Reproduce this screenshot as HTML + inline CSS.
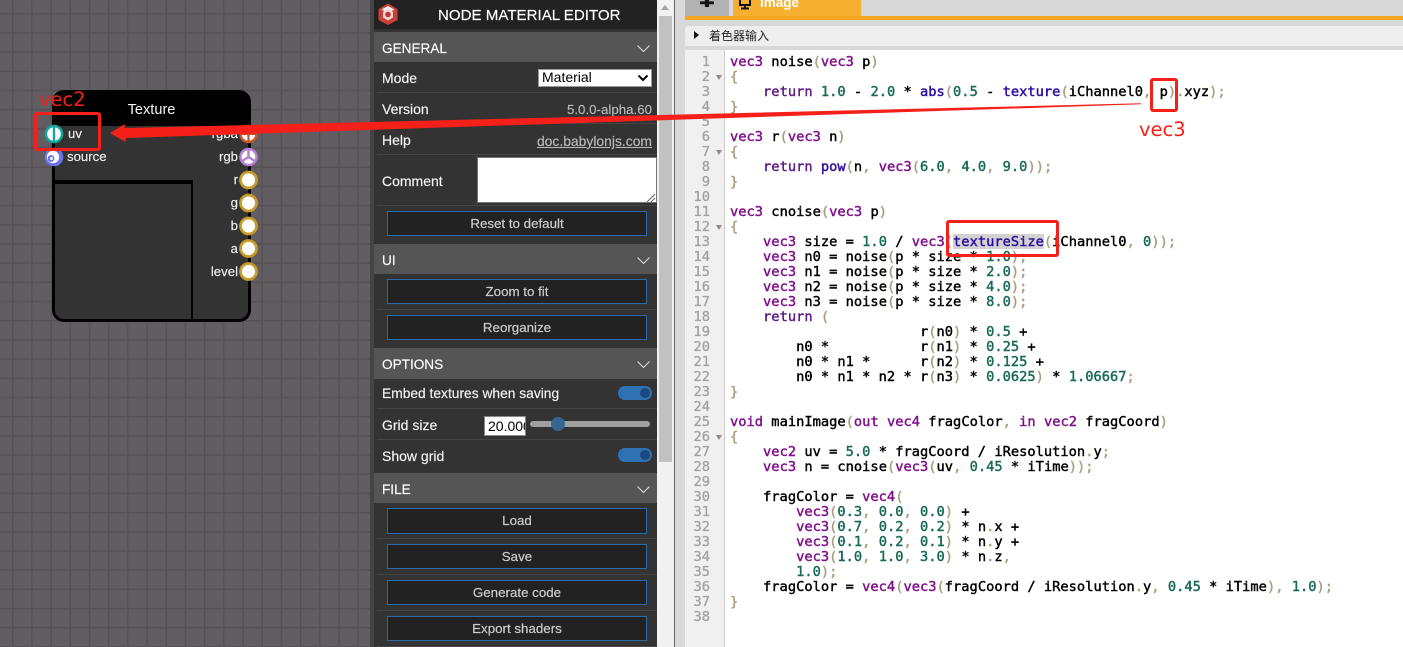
<!DOCTYPE html>
<html lang="zh"><head><meta charset="utf-8"><title>Node Material Editor</title>
<style>
html,body{margin:0;padding:0;width:1403px;height:647px;overflow:hidden;background:#d8d8d8;font-family:"Liberation Sans",Arial,sans-serif}
.a{position:absolute}
#grid{left:0;top:0;width:370px;height:647px;background-color:#615d62;background-image:linear-gradient(#555155 1.5px,transparent 1.5px),linear-gradient(90deg,#555155 1.5px,transparent 1.5px);background-size:19.2px 19.2px;background-position:12px 13px}
#panel{left:370px;top:0;width:287px;height:647px;background:#333;border-left:4px solid #444;box-sizing:border-box;color:#fff;font-size:14px}
.t{position:absolute;white-space:nowrap;line-height:16px;color:#f4f4f4;font-size:14px;-webkit-text-stroke:.15px currentColor}
.h{position:absolute;left:374px;width:283px;height:30px;background:#555;color:#fff;font-size:13.6px;line-height:34px;-webkit-text-stroke:.15px currentColor}
.h span{position:absolute;left:8px}
.h svg{position:absolute;left:262px;top:11px}
.s{position:absolute;left:377px;width:280px;height:1px;background:#444}
.b{position:absolute;left:387px;width:260px;height:25px;box-sizing:border-box;border:1px solid #2b6aa8;background:#222;color:#ccc;font-size:13.33px;font-weight:400;line-height:23px;text-align:center;-webkit-text-stroke:.2px currentColor}
.tog{position:absolute;left:618px;width:34px;height:14px;border-radius:7px;background:#2e72b4}
.tog i{position:absolute;right:2px;top:2px;width:10px;height:10px;border-radius:50%;background:#1c4a7e}
#code{left:730px;top:55px;margin:0;font:13.72px/15px "DejaVu Sans Mono","Liberation Mono",monospace;color:#000;-webkit-text-stroke:.42px currentColor;white-space:pre}
#nums{left:685px;top:55px;width:25px;margin:0;text-align:right;font:13.72px/15px "DejaVu Sans Mono",monospace;color:#a3a3a3;-webkit-text-stroke:.35px currentColor;white-space:pre}
.k{color:#80108c}.r{color:#5c1b84}.f{color:#2b0ba0}.n{color:#176a55}.p{color:#a89f80}
.lb{position:absolute;color:#f0f0f0;font-size:13.2px;line-height:16px;white-space:nowrap;-webkit-text-stroke:.15px currentColor}
.lr{right:1165px;text-align:right}
.red{position:absolute;border:3px solid #f5201a;box-sizing:border-box;border-radius:3px}
.fold{position:absolute;left:716px;width:0;height:0;border-left:3px solid transparent;border-right:3px solid transparent;border-top:5px solid #8c8c8c}
</style></head><body>
<div class="a" id="grid"></div>

<!-- node -->
<div class="a" style="left:52px;top:90px;width:199px;height:232px;box-sizing:border-box;background:#333;border:3.5px solid #000;border-radius:12px;overflow:hidden">
  <div class="a" style="left:-4px;top:-4px;width:210px;height:37px;background:#000"></div>
  <div class="a" style="left:-4px;top:87px;width:142px;height:150px;box-sizing:border-box;border:solid #000;border-width:4px 2.5px 0 0"></div>
</div>
<div class="a" style="left:52px;top:101px;width:199px;text-align:center;color:#f5f5f5;font-size:14.6px;line-height:18px">Texture</div>
<div class="lb" style="left:68px;top:126px">uv</div>
<div class="lb" style="left:67px;top:149px">source</div>
<div class="lb lr" style="top:126px">rgba</div>
<div class="lb lr" style="top:149px">rgb</div>
<div class="lb lr" style="top:172px">r</div>
<div class="lb lr" style="top:195px">g</div>
<div class="lb lr" style="top:218px">b</div>
<div class="lb lr" style="top:241px">a</div>
<div class="lb lr" style="top:264px">level</div>
<svg class="a" style="left:0;top:0" width="300" height="300" viewBox="0 0 300 300">
  <circle cx="54" cy="134" r="9.3" fill="#16a79c"/><circle cx="54" cy="134" r="6.8" fill="#fff"/><rect x="52.8" y="126" width="2.4" height="16" fill="#16a79c"/>
  <circle cx="54" cy="157" r="9.3" fill="#6a74ea"/><circle cx="53" cy="157" r="6.2" fill="#fff"/><circle cx="51" cy="158.500" r="3.400" fill="#6a74ea"/><circle cx="51.500" cy="158.500" r="1.500" fill="#fff"/>
  <circle cx="248.500" cy="134" r="9.300" fill="#c4562c"/><circle cx="248.500" cy="134" r="6.800" fill="#fff"/><path d="M248.500 126v16M241 134h15" stroke="#c4562c" stroke-width="2.200"/>
  <circle cx="248.500" cy="157" r="9.300" fill="#b381d0"/><circle cx="248.500" cy="157" r="6.800" fill="#fff"/><path d="M248.500 157v-8M248.500 157l7 4.500M248.500 157l-7 4.500" stroke="#b381d0" stroke-width="2.400"/>
  <g fill="#fff" stroke="#c79a2c" stroke-width="2.800">
    <circle cx="248.500" cy="180" r="8"/><circle cx="248.500" cy="203" r="8"/><circle cx="248.500" cy="226" r="8"/><circle cx="248.500" cy="248.500" r="8"/><circle cx="248.500" cy="271.500" r="8"/>
  </g>
</svg>

<!-- panel -->
<div class="a" id="panel"></div>
<div class="a" style="left:374px;top:0;width:283px;height:29px;background:#222"></div>
<svg class="a" style="left:377px;top:2px" width="22" height="24" viewBox="0 0 22 24">
  <path d="M11 1.500 20.500 7v11L11 23 1.500 18V7z" fill="#c9403a"/><path d="M11 4 17.500 7.500 11 11 4.500 7.500z" fill="#eee"/><path d="M11 6.500 16 10v5.500L11 18.500 6 15.500V10z" fill="#f2d8d4"/><circle cx="11" cy="12.500" r="2.800" fill="#c33"/>
</svg>
<div class="t" style="left:438px;top:8px;font-size:15.1px;color:#fff">NODE MATERIAL EDITOR</div>

<div class="h" style="top:32px"><span>GENERAL</span><svg width="15" height="12" viewBox="0 0 15 12"><path d="M1.500 2.500 7.500 8.500 13.500 2.500" fill="none" stroke="#ddd" stroke-width="1"/></svg></div>
<div class="t" style="left:382px;top:70px">Mode</div>
<div class="a" style="left:538px;top:69px;width:114px;height:18px;box-sizing:border-box;background:#fff;border:1px solid #999;color:#000;font-size:14px;line-height:15px;padding-left:3px">Material
  <svg class="a" style="left:98px;top:4px" width="12" height="8" viewBox="0 0 12 8"><path d="M1.500 1.500 6 6 10.500 1.500" fill="none" stroke="#000" stroke-width="2"/></svg></div>
<div class="s" style="top:92px"></div>
<div class="t" style="left:382px;top:101px">Version</div>
<div class="t" style="right:751px;top:102px;font-size:13.3px;color:#bbb">5.0.0-alpha.60</div>
<div class="s" style="top:123px"></div>
<div class="t" style="left:382px;top:132px">Help</div>
<div class="t" style="right:751px;top:133px;font-size:13.9px;color:#bbb;text-decoration:underline">doc.babylonjs.com</div>
<div class="s" style="top:154px"></div>
<div class="t" style="left:382px;top:173px">Comment</div>
<div class="a" style="left:477px;top:157px;width:180px;height:46px;box-sizing:border-box;background:#fff;border:1px solid #777"></div>
<svg class="a" style="left:646px;top:193px" width="10" height="10"><path d="M1 9 9 1M5 9 9 5" stroke="#666" stroke-width="1"/></svg>
<div class="s" style="top:205px"></div>
<div class="b" style="top:211px">Reset to default</div>

<div class="h" style="top:244px"><span>UI</span><svg width="15" height="12" viewBox="0 0 15 12"><path d="M1.500 2.500 7.500 8.500 13.500 2.500" fill="none" stroke="#ddd" stroke-width="1"/></svg></div>
<div class="b" style="top:279px">Zoom to fit</div>
<div class="s" style="top:309px"></div>
<div class="b" style="top:315px">Reorganize</div>

<div class="h" style="top:348px;height:31px"><span>OPTIONS</span><svg width="15" height="12" viewBox="0 0 15 12"><path d="M1.500 2.500 7.500 8.500 13.500 2.500" fill="none" stroke="#ddd" stroke-width="1"/></svg></div>
<div class="t" style="left:382px;top:386px;font-size:13.8px">Embed textures when saving</div>
<div class="tog" style="top:386px"><i></i></div>
<div class="s" style="top:408px"></div>
<div class="t" style="left:382px;top:417px">Grid size</div>
<div class="a" style="left:484px;top:416px;width:42px;height:20px;box-sizing:border-box;background:#fff;border:1px solid #888;color:#000;font-size:14px;line-height:19px;padding-left:3px;overflow:hidden;white-space:nowrap">20.000</div>
<div class="a" style="left:530px;top:421px;width:120px;height:6px;border-radius:3px;background:#a0a0a0"></div>
<div class="a" style="left:551px;top:417px;width:14px;height:14px;border-radius:50%;background:#36668f"></div>
<div class="s" style="top:439px"></div>
<div class="t" style="left:382px;top:448px">Show grid</div>
<div class="tog" style="top:448px"><i></i></div>

<div class="h" style="top:473px"><span>FILE</span><svg width="15" height="12" viewBox="0 0 15 12"><path d="M1.500 2.500 7.500 8.500 13.500 2.500" fill="none" stroke="#ddd" stroke-width="1"/></svg></div>
<div class="b" style="top:508px;height:26px;line-height:24px">Load</div>
<div class="s" style="top:538px"></div>
<div class="b" style="top:544px">Save</div>
<div class="s" style="top:574px"></div>
<div class="b" style="top:580px">Generate code</div>
<div class="s" style="top:610px"></div>
<div class="b" style="top:616px">Export shaders</div>
<div class="s" style="top:646px"></div>

<!-- scrollbar -->
<div class="a" style="left:657px;top:0;width:17px;height:647px;background:#f1f1f1"></div>
<div class="a" style="left:659px;top:16px;width:13px;height:446px;background:#c1c1c1"></div>
<svg class="a" style="left:660px;top:5px" width="10" height="6"><path d="M5 0 9 5H1z" fill="#a3a3a3"/></svg>
<div class="a" style="left:674px;top:0;width:1px;height:647px;background:#666"></div>

<!-- shader editor -->
<div class="a" style="left:685px;top:0;width:44px;height:16px;background:#b2b2b2"></div>
<div class="a" style="left:700px;top:0;width:14px;height:7px;background:#111;clip-path:polygon(35% 0,65% 0,65% 20%,100% 20%,100% 60%,65% 60%,65% 100%,35% 100%,35% 60%,0 60%,0 20%,35% 20%)"></div>
<div class="a" style="left:733px;top:0;width:128px;height:16px;background:#f7b030;overflow:hidden">
  <div class="a" style="left:27px;top:-5px;color:#fff;font-size:13.500px;font-weight:700;line-height:16px">Image</div>
  <svg class="a" style="left:5px;top:0" width="14" height="10" viewBox="0 0 14 10"><path d="M2 -2h10v7H2zM7 5v3M3 8.500h8" fill="none" stroke="#111" stroke-width="2"/></svg>
</div>
<div class="a" style="left:685px;top:16px;width:718px;height:4px;background:#f5a623"></div>
<div class="a" style="left:685px;top:26px;width:718px;height:20px;background:#eee;border-radius:3px 0 0 0"></div>
<div class="a" style="left:694px;top:31px;width:0;height:0;border-top:4.500px solid transparent;border-bottom:4.500px solid transparent;border-left:5.500px solid #111"></div>
<div class="a" style="left:709px;top:28px;font:12px/16px 'Noto Sans CJK SC','WenQuanYi Zen Hei',sans-serif;color:#222;white-space:nowrap">着色器输入</div>
<div class="a" style="left:685px;top:50px;width:718px;height:597px;background:#fff"></div>
<div class="a" style="left:685px;top:50px;width:39px;height:597px;background:#f0f0f0;border-right:1px solid #ccc"></div>
<pre class="a" id="nums">1
2
3
4
5
6
7
8
9
10
11
12
13
14
15
16
17
18
19
20
21
22
23
24
25
26
27
28
29
30
31
32
33
34
35
36
37
38</pre>
<i class="fold" style="top:75px"></i><i class="fold" style="top:150px"></i><i class="fold" style="top:225px"></i><i class="fold" style="top:435px"></i>
<div class="a" style="left:953px;top:234px;width:91px;height:15px;background:#d2d2d2"></div>
<pre class="a" id="code"><span class="k">vec3</span> noise<span class="p">(</span><span class="k">vec3</span> p<span class="p">)</span>
<span class="p">{</span>
    <span class="r">return</span> <span class="n">1.0</span> - <span class="n">2.0</span> * <span class="f">abs</span><span class="p">(</span><span class="n">0.5</span> - <span class="f">texture</span><span class="p">(</span>iChannel0<span class="p">,</span> p<span class="p">).</span>xyz<span class="p">);</span>
<span class="p">}</span>

<span class="k">vec3</span> r<span class="p">(</span><span class="k">vec3</span> n<span class="p">)</span>
<span class="p">{</span>
    <span class="r">return</span> <span class="f">pow</span><span class="p">(</span>n<span class="p">,</span> <span class="k">vec3</span><span class="p">(</span><span class="n">6.0</span><span class="p">,</span> <span class="n">4.0</span><span class="p">,</span> <span class="n">9.0</span><span class="p">));</span>
<span class="p">}</span>

<span class="k">vec3</span> cnoise<span class="p">(</span><span class="k">vec3</span> p<span class="p">)</span>
<span class="p">{</span>
    <span class="k">vec3</span> size = <span class="n">1.0</span> / <span class="k">vec3</span><span class="p">(</span><span class="f">textureSize</span><span class="p">(</span>iChannel0<span class="p">,</span> <span class="n">0</span><span class="p">));</span>
    <span class="k">vec3</span> n0 = noise<span class="p">(</span>p * size * <span class="n">1.0</span><span class="p">);</span>
    <span class="k">vec3</span> n1 = noise<span class="p">(</span>p * size * <span class="n">2.0</span><span class="p">);</span>
    <span class="k">vec3</span> n2 = noise<span class="p">(</span>p * size * <span class="n">4.0</span><span class="p">);</span>
    <span class="k">vec3</span> n3 = noise<span class="p">(</span>p * size * <span class="n">8.0</span><span class="p">);</span>
    <span class="r">return</span> <span class="p">(</span>
                       r<span class="p">(</span>n0<span class="p">)</span> * <span class="n">0.5</span> +
        n0 *           r<span class="p">(</span>n1<span class="p">)</span> * <span class="n">0.25</span> +
        n0 * n1 *      r<span class="p">(</span>n2<span class="p">)</span> * <span class="n">0.125</span> +
        n0 * n1 * n2 * r<span class="p">(</span>n3<span class="p">)</span> * <span class="n">0.0625</span><span class="p">)</span> * <span class="n">1.06667</span><span class="p">;</span>
<span class="p">}</span>

<span class="k">void</span> mainImage<span class="p">(</span><span class="k">out</span> <span class="k">vec4</span> fragColor<span class="p">,</span> <span class="k">in</span> <span class="k">vec2</span> fragCoord<span class="p">)</span>
<span class="p">{</span>
    <span class="k">vec2</span> uv = <span class="n">5.0</span> * fragCoord / iResolution<span class="p">.</span>y<span class="p">;</span>
    <span class="k">vec3</span> n = cnoise<span class="p">(</span><span class="k">vec3</span><span class="p">(</span>uv<span class="p">,</span> <span class="n">0.45</span> * iTime<span class="p">));</span>

    fragColor = <span class="k">vec4</span><span class="p">(</span>
        <span class="k">vec3</span><span class="p">(</span><span class="n">0.3</span><span class="p">,</span> <span class="n">0.0</span><span class="p">,</span> <span class="n">0.0</span><span class="p">)</span> +
        <span class="k">vec3</span><span class="p">(</span><span class="n">0.7</span><span class="p">,</span> <span class="n">0.2</span><span class="p">,</span> <span class="n">0.2</span><span class="p">)</span> * n<span class="p">.</span>x +
        <span class="k">vec3</span><span class="p">(</span><span class="n">0.1</span><span class="p">,</span> <span class="n">0.2</span><span class="p">,</span> <span class="n">0.1</span><span class="p">)</span> * n<span class="p">.</span>y +
        <span class="k">vec3</span><span class="p">(</span><span class="n">1.0</span><span class="p">,</span> <span class="n">1.0</span><span class="p">,</span> <span class="n">3.0</span><span class="p">)</span> * n<span class="p">.</span>z<span class="p">,</span>
        <span class="n">1.0</span><span class="p">);</span>
    fragColor = <span class="k">vec4</span><span class="p">(</span><span class="k">vec3</span><span class="p">(</span>fragCoord / iResolution<span class="p">.</span>y<span class="p">,</span> <span class="n">0.45</span> * iTime<span class="p">),</span> <span class="n">1.0</span><span class="p">);</span>
<span class="p">}</span></pre>

<!-- annotations -->
<svg class="a" style="left:0;top:0" width="1403" height="647" viewBox="0 0 1403 647">
  <path d="M110 133 125 124 124.500 128 1141 103.300V104.300L126 138 125.500 142Z" fill="#f5201a"/>
</svg>
<div class="red" style="left:34px;top:112px;width:67px;height:39px"></div>
<div class="red" style="left:1150px;top:78px;width:28px;height:34px"></div>
<div class="red" style="left:946px;top:220px;width:113px;height:37px"></div>
<div class="a" style="left:39px;top:88px;color:#f5201a;font:19.5px/24px 'DejaVu Sans',sans-serif;white-space:nowrap">vec2</div>
<div class="a" style="left:1139px;top:118px;color:#f5201a;font:19.5px/24px 'DejaVu Sans',sans-serif;white-space:nowrap">vec3</div>
</body></html>
